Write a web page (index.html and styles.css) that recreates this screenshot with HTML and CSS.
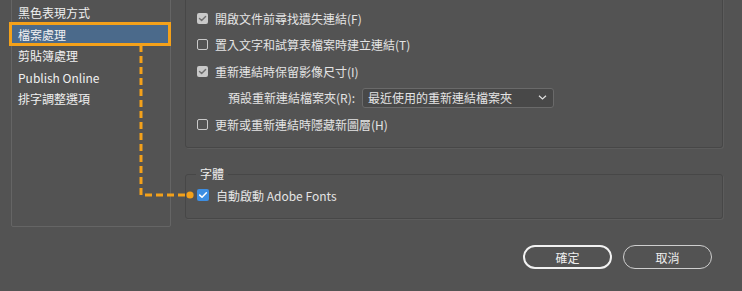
FILE: index.html
```html
<!DOCTYPE html>
<html lang="zh-Hant">
<head>
<meta charset="utf-8">
<title>偏好設定 - 檔案處理</title>
<link rel="stylesheet" href="styles.css">
</head>
<body>
<div class="page">
  <div class="main">
    <ul class="sidebar">
      <li class="item">黑色表現方式</li>
      <li class="item selected">檔案處理</li>
      <li class="item">剪貼簿處理</li>
      <li class="item">Publish Online</li>
      <li class="item">排字調整選項</li>
    </ul>
    <div class="content">
      <div class="group links">
        <div class="row"><span class="cb checked"><svg viewBox="0 0 11 11"><path d="M2.5 5.6 L4.6 7.6 L8.6 3.4" /></svg></span><span>開啟文件前尋找遺失連結(F)</span></div>
        <div class="row"><span class="cb"></span><span>置入文字和試算表檔案時建立連結(T)</span></div>
        <div class="row"><span class="cb checked"><svg viewBox="0 0 11 11"><path d="M2.5 5.6 L4.6 7.6 L8.6 3.4" /></svg></span><span>重新連結時保留影像尺寸(I)</span></div>
        <div class="row sub">
          <span>預設重新連結檔案夾(R):</span>
          <div class="select"><span>最近使用的重新連結檔案夾</span><svg class="chev" viewBox="0 0 9 5"><path d="M1 0.8 L4.5 4 L8 0.8" /></svg></div>
        </div>
        <div class="row"><span class="cb"></span><span>更新或重新連結時隱藏新圖層(H)</span></div>
      </div>
      <fieldset class="group fonts">
        <legend>字體</legend>
        <div class="row"><span class="cb blue"><svg viewBox="0 0 11 11"><path d="M2.5 5.6 L4.6 7.6 L8.6 3.4" /></svg></span><span>自動啟動 Adobe Fonts</span></div>
      </fieldset>
      <div class="footer">
        <button class="btn primary">確定</button>
        <button class="btn">取消</button>
      </div>
    </div>
  </div>
  <svg class="annot" width="742" height="291" viewBox="0 0 742 291">
    <path class="dash" d="M141 45 V195 H187" />
    <circle cx="190" cy="195" r="3.6" fill="#f4a11a" />
  </svg>
</div>
</body>
</html>
```

FILE: styles.css
```css
html, body {
  margin: 0;
  padding: 0;
  background: #535353;
}

body {
  font-family: "Noto Sans CJK TC", "Noto Sans", sans-serif;
  font-size: 12px;
  color: #e4e4e4;
  overflow: hidden;
}

.page {
  position: relative;
  display: flow-root;
  width: 742px;
  height: 291px;
  overflow: hidden;
}

.main {
  display: flex;
  align-items: flex-start;
  padding-left: 11px;
  margin-top: -20px;
}

.sidebar {
  list-style: none;
  margin: 0;
  padding: 21px 0 0 0;
  box-sizing: border-box;
  width: 160px;
  height: 247px;
  border: 1px solid #656565;
  border-radius: 2px;
}

.item {
  position: relative;
  height: 21.5px;
  line-height: 21.5px;
  padding-left: 6px;
  color: #f0f0f0;
  white-space: nowrap;
}

.item.selected {
  background: #4b6a8b;
}

.item.selected::after {
  content: "";
  position: absolute;
  left: -3px;
  right: -1px;
  top: -1.5px;
  bottom: -0.5px;
  border: 3px solid #f4a11a;
}

.content {
  margin-left: 14px;
  width: 538px;
  display: flex;
  flex-direction: column;
}

.group {
  box-sizing: border-box;
  border: 1px solid #474747;
  border-radius: 3px;
  box-shadow: 1px 1px 0 #5c5c5c;
}

.links {
  height: 168px;
  padding: 23.75px 0 0 11px;
}

.row {
  display: flex;
  align-items: center;
  height: 26.5px;
  gap: 7px;
  white-space: nowrap;
}

.row.sub {
  padding-left: 31px;
  gap: 7px;
}

.cb {
  box-sizing: border-box;
  width: 11px;
  height: 11px;
  border: 1px solid #c9c9c9;
  border-radius: 2px;
  display: flex;
}

.cb svg {
  width: 100%;
  height: 100%;
}

.cb path {
  fill: none;
  stroke-width: 1.4;
  stroke-linecap: round;
  stroke-linejoin: round;
}

.cb.checked {
  background: #c9c9c9;
  border: none;
}

.cb.checked path {
  stroke: #6f6f6f;
}

.cb.blue {
  width: 12px;
  height: 12px;
  background: #3d8ee3;
  border: none;
}

.cb.blue path {
  stroke: #ffffff;
}

.select {
  box-sizing: border-box;
  width: 192px;
  height: 20px;
  display: flex;
  align-items: center;
  justify-content: space-between;
  padding: 0 6px 0 5px;
  background: #484848;
  border: 1px solid #6a6a6a;
  border-radius: 3px;
}

.chev {
  width: 9px;
  height: 5px;
}

.chev path {
  fill: none;
  stroke: #e0e0e0;
  stroke-width: 1.2;
}

.fonts {
  margin: 18px 0 0 0;
  padding: 3px 0 13px 11px;
  min-width: 0;
}

.fonts legend {
  padding: 0 4px;
  margin-left: -1px;
  line-height: 16px;
  color: #ececec;
}

.fonts .row {
  height: 20px;
}

.footer {
  display: flex;
  justify-content: flex-end;
  gap: 11px;
  padding-right: 11px;
  margin-top: 26px;
}

.btn {
  box-sizing: border-box;
  width: 89px;
  height: 24px;
  border-radius: 12px;
  background: transparent;
  border: 1px solid #cfcfcf;
  color: #eeeeee;
  font-family: inherit;
  font-size: 12px;
  padding: 0;
}

.btn.primary {
  border: 2px solid #f2f2f2;
}

.annot {
  position: absolute;
  left: 0;
  top: 0;
  pointer-events: none;
}

.dash {
  fill: none;
  stroke: #f4a11a;
  stroke-width: 3;
  stroke-dasharray: 7 4;
}
```
